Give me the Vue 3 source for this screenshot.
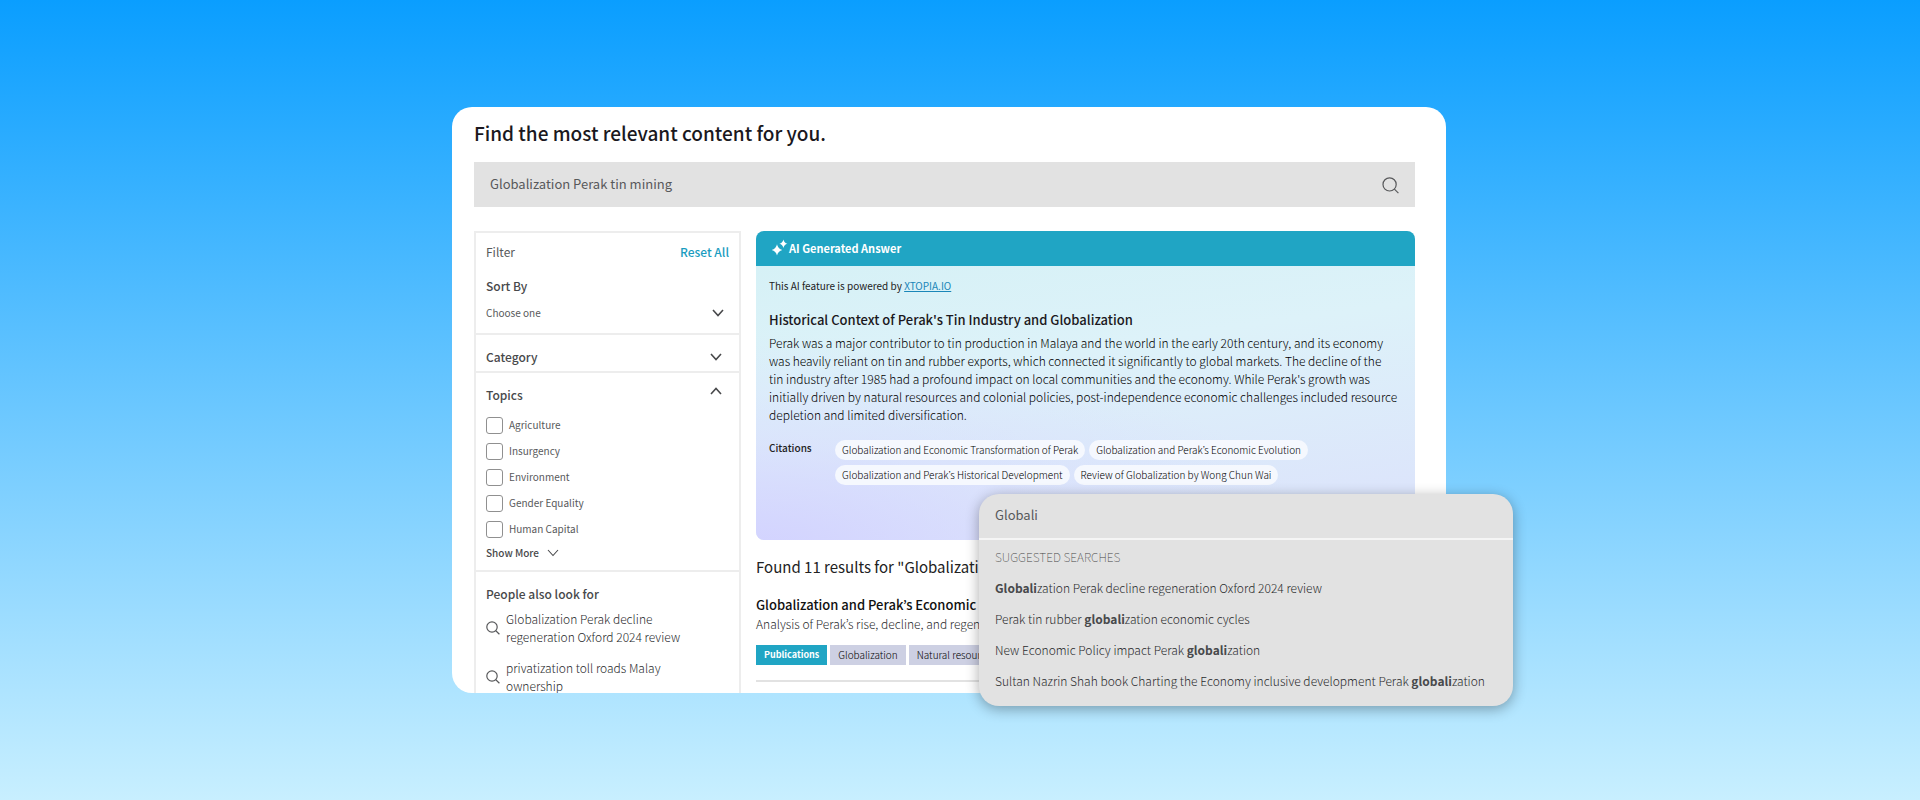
<script setup>
import { ref } from 'vue'

const query = ref('Globalization Perak tin mining')
const typed = ref('Globali')
const sort = ref('')
const topics = ['Agriculture', 'Insurgency', 'Environment', 'Gender Equality', 'Human Capital']
const related = [
  'Globalization Perak decline regeneration Oxford 2024 review',
  'privatization toll roads Malay ownership'
]
const summary = [
  'Perak was a major contributor to tin production in Malaya and the world in the early 20th century, and its economy',
  'was heavily reliant on tin and rubber exports, which connected it significantly to global markets. The decline of the',
  'tin industry after 1985 had a profound impact on local communities and the economy. While Perak\'s growth was',
  'initially driven by natural resources and colonial policies, post-independence economic challenges included resource',
  'depletion and limited diversification.'
]
const citations = [
  'Globalization and Economic Transformation of Perak',
  'Globalization and Perak’s Economic Evolution',
  'Globalization and Perak’s Historical Development',
  'Review of Globalization by Wong Chun Wai'
]
const suggestions = [
  { before: '', match: 'Globali', after: 'zation Perak decline regeneration Oxford 2024 review' },
  { before: 'Perak tin rubber ', match: 'globali', after: 'zation economic cycles' },
  { before: 'New Economic Policy impact Perak ', match: 'globali', after: 'zation' },
  { before: 'Sultan Nazrin Shah book Charting the Economy inclusive development Perak ', match: 'globali', after: 'zation' }
]
</script>

<template>
  <main class="stage">
    <div class="frame">
      <section class="card">
        <h1>Find the most relevant content for you.</h1>
        <form class="search" @submit.prevent>
          <input v-model="query" type="text" aria-label="Search content" />
          <button type="submit" aria-label="Search">
            <svg width="18" height="18" viewBox="0 0 18 18"><circle cx="8.6" cy="8.4" r="6.6" /><path d="M13.4 13.2 17.4 17.2" /></svg>
          </button>
        </form>

        <div class="columns">
          <aside class="filters">
            <div class="block sort">
              <div class="row">
                <span>Filter</span>
                <button type="button" class="reset">Reset All</button>
              </div>
              <label class="heading" for="sort">Sort By</label>
              <div class="select">
                <select id="sort" v-model="sort"><option value="">Choose one</option></select>
                <svg class="chev" width="12" height="8" viewBox="0 0 12 8"><path d="M1 1 6 6.5 11 1" /></svg>
              </div>
            </div>
            <button type="button" class="block toggle category">
              <span class="heading">Category</span>
              <svg class="chev" width="12" height="8" viewBox="0 0 12 8"><path d="M1 1 6 6.5 11 1" /></svg>
            </button>
            <div class="block topics">
              <button type="button" class="toggle open">
                <span class="heading">Topics</span>
                <svg class="chev" width="12" height="8" viewBox="0 0 12 8"><path d="M1 7 6 1.5 11 7" /></svg>
              </button>
              <label v-for="t in topics" :key="t" class="check"><input type="checkbox" />{{ t }}</label>
              <button type="button" class="more">
                Show More
                <svg class="chev thin" width="12" height="8" viewBox="0 0 12 8"><path d="M1 1 6 6.5 11 1" /></svg>
              </button>
            </div>
            <div class="also">
              <h2 class="heading">People also look for</h2>
              <a v-for="r in related" :key="r" href="#">
                <svg width="14" height="14" viewBox="0 0 14 14"><circle cx="6" cy="6" r="5.2" /><path d="M9.8 9.8 13.4 13.2" /></svg>
                <span>{{ r }}</span>
              </a>
            </div>
          </aside>

          <div class="results">
            <article class="answer">
              <header>
                <svg width="17" height="17" viewBox="0 0 17 17">
                  <path d="M6 5.2Q7 10 11.4 11Q7 12 6 16.6Q5 12 .6 11Q5 10 6 5.2Z" />
                  <path d="M12.4.6Q13.1 4 16.4 4.8Q13.1 5.6 12.4 9Q11.7 5.6 8.4 4.8Q11.7 4 12.4.6Z" />
                </svg>
                AI Generated Answer
              </header>
              <div class="body">
                <p class="powered">This AI feature is powered by <a href="#">XTOPIA.IO</a></p>
                <h2>Historical Context of Perak's Tin Industry and Globalization</h2>
                <p class="text"><template v-for="line in summary" :key="line">{{ line }}<br /></template></p>
                <div class="citations">
                  <h3>Citations</h3>
                  <div class="pills"><a v-for="c in citations" :key="c" href="#">{{ c }}</a></div>
                </div>
              </div>
            </article>
            <h2 class="found">Found 11 results for "Globalization"</h2>
            <article class="result">
              <h3>Globalization and Perak’s Economic Evolution</h3>
              <p>Analysis of Perak’s rise, decline, and regeneration</p>
              <div class="tags"><span class="primary">Publications</span><span>Globalization</span><span>Natural resources</span></div>
            </article>
          </div>
        </div>
      </section>

      <section class="suggest">
        <input v-model="typed" type="text" aria-label="Search term" />
        <div class="list">
          <h2>SUGGESTED SEARCHES</h2>
          <a v-for="s in suggestions" :key="s.after + s.before" href="#">{{ s.before }}<b>{{ s.match }}</b>{{ s.after }}</a>
        </div>
      </section>
    </div>
  </main>
</template>

<style>
body { margin: 0; }
</style>

<style scoped>
.stage {
  display: grid;
  grid-template-columns: 452fr 994fr 474fr;
  grid-template-rows: minmax(0, 1fr);
  box-sizing: border-box;
  height: 100vh;
  padding: 107px 0;
  background: linear-gradient(#0a9eff, #c8efff);
  color: #58595b;
  font-family: "Noto Sans CJK KR", "Noto Sans", sans-serif;
  font-size: 12px;
  line-height: 18px;
}
.frame { grid-column: 2; position: relative; min-width: 0; }
.card {
  box-sizing: border-box;
  height: 100%;
  padding: 12px 31px 0 22px;
  overflow: hidden;
  border-radius: 20px;
  background: #fff;
}
h1, h2, h3, p { margin: 0; }
button, input, select { font: inherit; color: inherit; }
button { padding: 0; border: 0; background: none; cursor: pointer; }
svg { flex: none; fill: none; stroke: #58595b; stroke-width: 1.2; }
a { color: inherit; text-decoration: none; }

h1 { font-size: 19px; font-weight: 500; line-height: 28px; color: #1a1820; }
.search { display: flex; align-items: center; height: 45px; margin-top: 15px; padding: 0 16px; background: #e2e2e2; }
.search input { flex: 1; min-width: 0; padding: 0 0 2px; border: 0; outline: 0; background: none; font-size: 13px; line-height: 20px; }
.search button { display: flex; }

.columns { display: grid; grid-template-columns: 267px minmax(0, 1fr); align-items: start; gap: 15px; margin-top: 24px; }
.filters { box-sizing: border-box; border: 2px solid #ededed; }
.block { box-sizing: border-box; padding: 0 10px; border-bottom: 2px solid #ededed; }
.heading { font-size: 12px; font-weight: 500; color: #48494b; }
.row { display: flex; justify-content: space-between; }
.reset { color: #1a9cc0; font-weight: 500; }
.sort { padding-top: 10px; padding-bottom: 11px; }
.sort .heading { display: block; margin-top: 16px; }
.select { display: flex; align-items: center; margin-top: 9px; padding-right: 5px; }
.select select { flex: 1; padding: 0; border: 0; outline: 0; appearance: none; background: none; font-size: 10px; line-height: 18px; }
.chev { stroke: #48494b; stroke-width: 1.6; }
.thin { stroke-width: 1.1; }
.toggle { display: flex; align-items: center; justify-content: space-between; width: 100%; text-align: left; }
.category { padding: 13px 17px 5px 10px; border-bottom: 2px solid #ededed; }
.topics { padding-top: 13px; padding-bottom: 8px; }
.open { padding-right: 7px; margin-bottom: 8px; }
.open .chev { margin-bottom: 8px; }
.check { display: flex; align-items: center; gap: 6px; height: 26px; font-size: 10px; }
.check input { appearance: none; box-sizing: border-box; width: 17px; height: 17px; margin: 0; border: 1px solid #909090; border-radius: 3px; background: #fff; }
.more { display: flex; align-items: center; gap: 8px; margin-top: 2px; font-size: 10px; font-weight: 500; color: #48494b; }
.also { padding: 13px 10px 0; }
.also a { display: flex; align-items: center; gap: 6px; margin: 7px 0 13px; font-size: 12px; font-weight: 300; line-height: 18px; color: #2a2b2d; }
.also span { max-width: 190px; }

.answer { border-radius: 8px; overflow: hidden; }
.answer header { display: flex; align-items: center; gap: 1px; box-sizing: border-box; height: 35px; padding: 0 15px 2px; background: #20a5c4; color: #fff; font-size: 11px; font-weight: 700; }
.answer header svg { fill: #fff; stroke: none; }
.body {
  box-sizing: border-box;
  min-height: 274px;
  padding: 11px 13px 54px;
  background: radial-gradient(ellipse 85% 80% at 0 105%, #d2d2ff, #d8dafe80 50%, transparent), linear-gradient(172deg, #d6f1f6, #ddf2f9 35%, #dce5fb 85%);
  color: #222;
}
.powered { font-size: 10px; }
.powered a { color: #1a86b8; text-decoration: underline; }
.body h2 { margin-top: 15px; font-size: 13px; font-weight: 500; line-height: 20px; color: #1a1820; }
.text { margin-top: 4px; font-size: 12px; font-weight: 300; line-height: 18px; color: #000; }
.citations { display: grid; grid-template-columns: 66px minmax(0, 1fr); margin-top: 16px; }
.citations h3 { font-size: 10px; font-weight: 500; line-height: 16px; }
.pills { display: flex; flex-wrap: wrap; gap: 5px 4px; }
.pills a { padding: 0 7px; border-radius: 10px; background: #f5f8fe; font-size: 10px; font-weight: 300; line-height: 20px; color: #000; }
.found { margin-top: 15px; font-size: 15px; font-weight: 400; line-height: 24px; color: #222; white-space: nowrap; }
.result { padding-bottom: 15px; border-bottom: 2px solid #e2e2e2; }
.result h3 { margin-top: 16px; font-size: 13px; font-weight: 500; line-height: 20px; color: #111; }
.result p { font-size: 12px; font-weight: 300; line-height: 18px; color: #2a2b2d; }
.tags { display: flex; gap: 3px; margin-top: 12px; }
.tags span { padding: 0 8px; background: #cdd0e3; color: #000; font-size: 10px; font-weight: 300; line-height: 20px; }
.tags .primary { background: #20a5c4; color: #fff; font-size: 9px; font-weight: 700; }

.suggest {
  position: absolute;
  right: -67px;
  bottom: -13px;
  width: 534px;
  overflow: hidden;
  border-radius: 20px;
  background: #e2e2e2;
  box-shadow: 0 3px 14px #0005;
}
.suggest input { display: block; box-sizing: border-box; width: 100%; height: 46px; padding: 0 16px 4px; border: 0; border-bottom: 2px solid #f5f5f5; outline: 0; background: none; font-size: 13px; }
.list { display: flex; flex-direction: column; padding: 8px 16px 16px; }
.list h2 { font-size: 12px; font-weight: 100; line-height: 18px; color: #444; }
.list a { margin-top: 13px; font-weight: 300; line-height: 18px; white-space: nowrap; color: #2a2b2d; }
.list b { font-weight: 700; color: #48494b; }
</style>
